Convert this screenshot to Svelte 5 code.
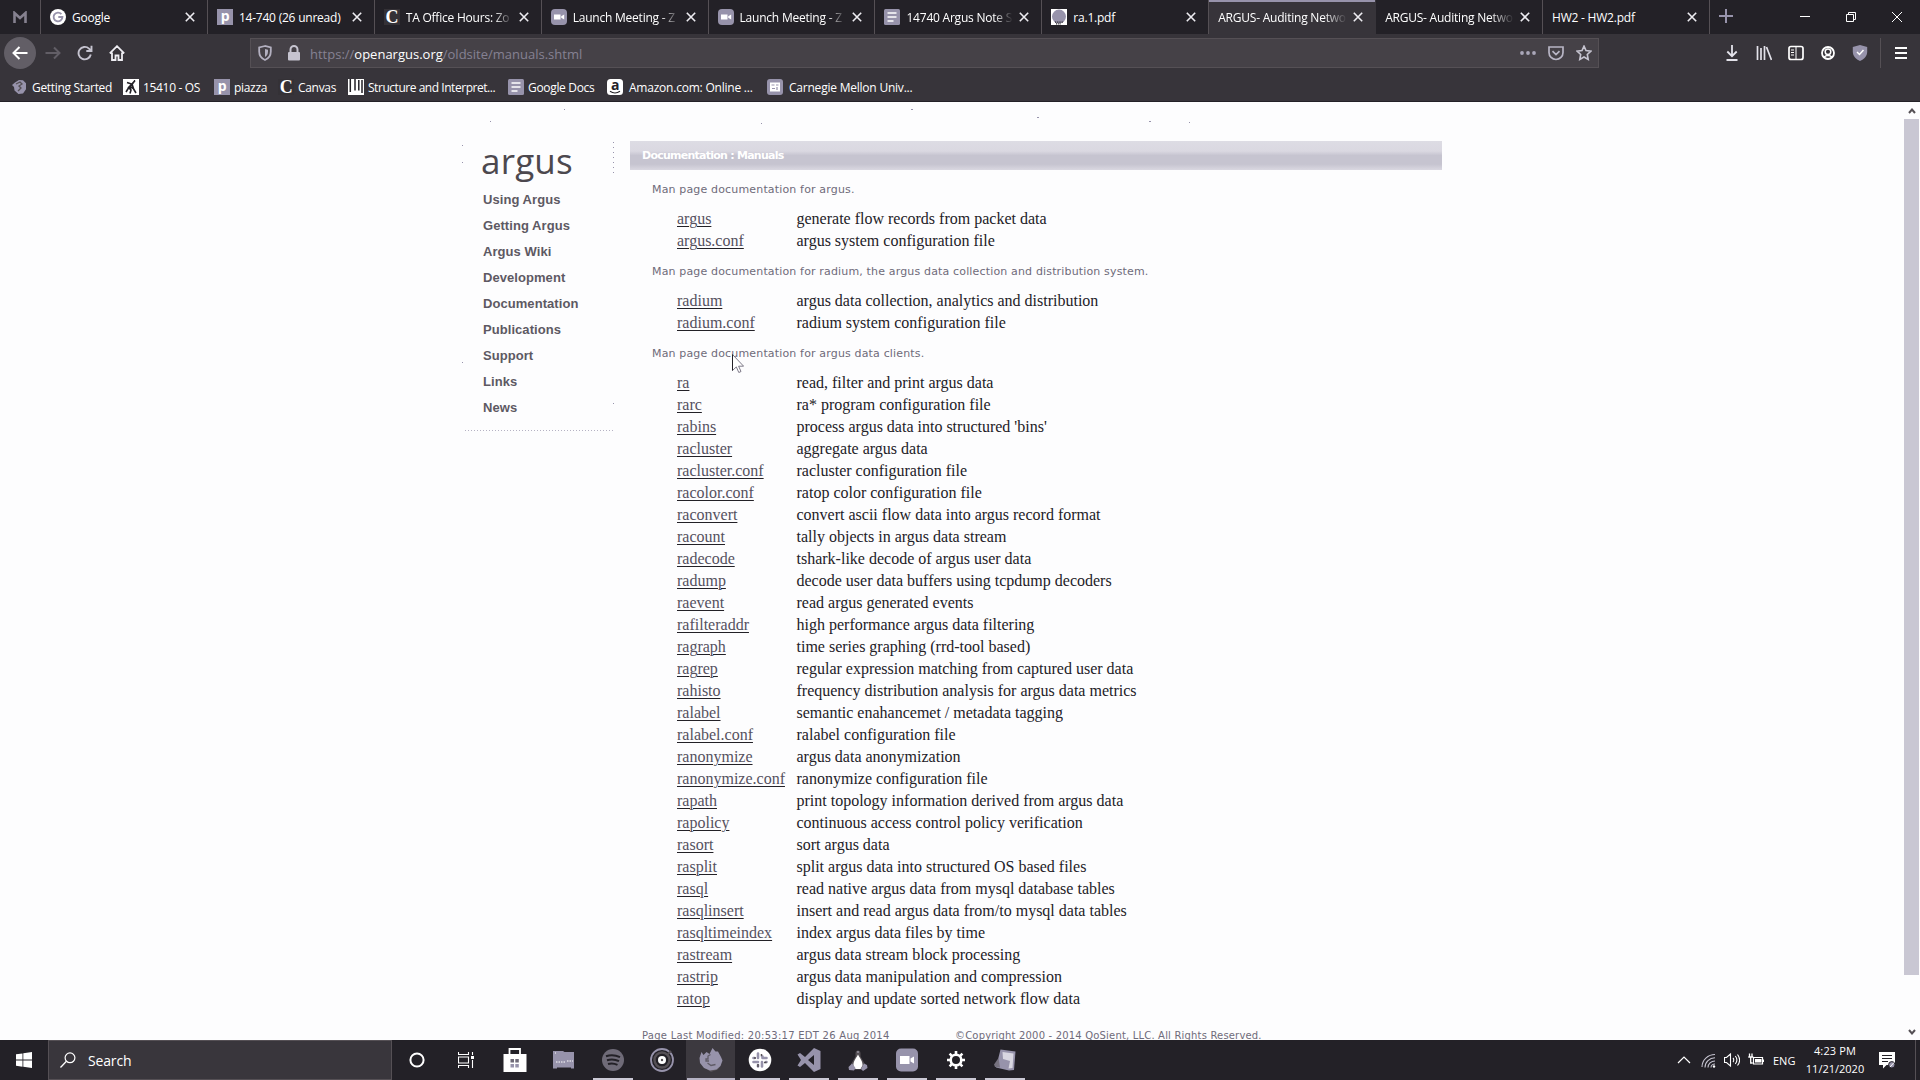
<script>
  const tabs = [
    { icon: 'google', title: 'Google' },
    { icon: 'piazza', title: '14-740 (26 unread)' },
    { icon: 'canvas', title: 'TA Office Hours: Zo', fade: true },
    { icon: 'zoom', title: 'Launch Meeting - Z', fade: true },
    { icon: 'zoom', title: 'Launch Meeting - Z', fade: true },
    { icon: 'docs', title: '14740 Argus Note S', fade: true },
    { icon: 'globe', title: 'ra.1.pdf' },
    { title: 'ARGUS- Auditing Netwo', active: true, fade: true },
    { title: 'ARGUS- Auditing Netwo', fade: true },
    { title: 'HW2 - HW2.pdf' }
  ];

  const bookmarks = [
    ['fox', 'Getting Started'],
    ['runner', '15410 - OS'],
    ['piazza', 'piazza'],
    ['canvas', 'Canvas'],
    ['books', 'Structure and Interpret...'],
    ['docs', 'Google Docs'],
    ['amazon', 'Amazon.com: Online ...'],
    ['cmu', 'Carnegie Mellon Univ...']
  ];

  const menu = ['Using Argus', 'Getting Argus', 'Argus Wiki', 'Development', 'Documentation', 'Publications', 'Support', 'Links', 'News'];

  const sections = [
    {
      intro: 'Man page documentation for argus.',
      rows: [
        ['argus', 'generate flow records from packet data'],
        ['argus.conf', 'argus system configuration file']
      ]
    },
    {
      intro: 'Man page documentation for radium, the argus data collection and distribution system.',
      rows: [
        ['radium', 'argus data collection, analytics and distribution'],
        ['radium.conf', 'radium system configuration file']
      ]
    },
    {
      intro: 'Man page documentation for argus data clients.',
      rows: [
        ['ra', 'read, filter and print argus data'],
        ['rarc', 'ra* program configuration file'],
        ['rabins', "process argus data into structured 'bins'"],
        ['racluster', 'aggregate argus data'],
        ['racluster.conf', 'racluster configuration file'],
        ['racolor.conf', 'ratop color configuration file'],
        ['raconvert', 'convert ascii flow data into argus record format'],
        ['racount', 'tally objects in argus data stream'],
        ['radecode', 'tshark-like decode of argus user data'],
        ['radump', 'decode user data buffers using tcpdump decoders'],
        ['raevent', 'read argus generated events'],
        ['rafilteraddr', 'high performance argus data filtering'],
        ['ragraph', 'time series graphing (rrd-tool based)'],
        ['ragrep', 'regular expression matching from captured user data'],
        ['rahisto', 'frequency distribution analysis for argus data metrics'],
        ['ralabel', 'semantic enahancemet / metadata tagging'],
        ['ralabel.conf', 'ralabel configuration file'],
        ['ranonymize', 'argus data anonymization'],
        ['ranonymize.conf', 'ranonymize configuration file'],
        ['rapath', 'print topology information derived from argus data'],
        ['rapolicy', 'continuous access control policy verification'],
        ['rasort', 'sort argus data'],
        ['rasplit', 'split argus data into structured OS based files'],
        ['rasql', 'read native argus data from mysql database tables'],
        ['rasqlinsert', 'insert and read argus data from/to mysql data tables'],
        ['rasqltimeindex', 'index argus data files by time'],
        ['rastream', 'argus data stream block processing'],
        ['rastrip', 'argus data manipulation and compression'],
        ['ratop', 'display and update sorted network flow data']
      ]
    }
  ];

  const apps = [
    { icon: 'folder' },
    { icon: 'spotify', open: true },
    { icon: 'disc' },
    { icon: 'firefox', open: true, active: true },
    { icon: 'slack', open: true },
    { icon: 'vscode', open: true },
    { icon: 'tux', open: true },
    { icon: 'meeting', open: true },
    { icon: 'gear', open: true },
    { icon: 'notepad', open: true }
  ];
</script>

{#snippet favicon(name)}
  <svg class="favicon" viewBox="0 0 16 16">
    {#if name === 'google'}
      <circle cx="8" cy="8" r="8" fill="#fff" />
      <path d="M11.4 5.2A4.4 4.4 0 1 0 12.4 8H8.3" fill="none" stroke="#9793ab" stroke-width="1.9" />
    {:else if name === 'piazza'}
      <rect width="16" height="16" fill="#9793ab" />
      <text x="8" y="12" text-anchor="middle" font-family="Open Sans, sans-serif" font-weight="700" font-size="14" fill="#fff">p</text>
    {:else if name === 'canvas'}
      <rect width="16" height="16" fill="#343136" />
      <text x="8" y="14" text-anchor="middle" font-family="Liberation Serif, serif" font-weight="700" font-size="18" fill="#fff">C</text>
    {:else if name === 'zoom'}
      <rect width="16" height="16" rx="4" fill="#9793ab" />
      <path d="M3 5.5h6.5v5H3zM10.2 7.3l3-1.8v5l-3-1.8z" fill="#fff" />
    {:else if name === 'docs'}
      <rect width="16" height="16" rx="1.5" fill="#9793ab" />
      <path d="M3.5 4h9M3.5 8h9M3.5 12h6" stroke="#fff" stroke-width="1.7" />
    {:else if name === 'globe'}
      <rect width="16" height="16" fill="#fff" />
      <circle cx="8" cy="7.6" r="7" fill="#9793ab" />
      <path d="M4 13.2h8M5 14.8h5" stroke="#232127" stroke-width="1.2" stroke-dasharray="1.2 1" />
    {:else if name === 'fox'}
      <path d="M3 3.500 7 1l4 .3 3 3v6l-3 4.200-4.500.4-4-3.400L2 8l-2-2z" fill="#9793ab" />
      <path d="M4 5l4-2 2 2-3 2 2 2-3 3" stroke="#555055" stroke-width="1.3" fill="none" />
    {:else if name === 'runner'}
      <rect width="16" height="16" fill="#fff" />
      <path d="M12 1.500 9 5l1.500 4.500L7 8zM9 5 5.500 8.500 8 11l-1 3.500M10 9l3 5M5.500 9 3 13M8.500 5 4 3.500" stroke="#232127" stroke-width="1.600" fill="#232127" />
    {:else if name === 'books'}
      <rect width="16" height="16" fill="#fff" />
      <path d="M2.3 0v13M7 0v11.5M10.8 1v10.5M14 1v13" stroke="#232127" stroke-width="1.5" />
    {:else if name === 'amazon'}
      <rect width="16" height="16" rx="3.5" fill="#fff" />
      <text x="8" y="11" text-anchor="middle" font-family="Open Sans, sans-serif" font-weight="700" font-size="14" fill="#232127">a</text>
      <path d="M3 12.3c3 2 7 2 10 0" stroke="#232127" stroke-width="1.1" fill="none" />
    {:else if name === 'cmu'}
      <rect width="16" height="16" rx="3" fill="#9793ab" />
      <path d="M3 3.500h10v9H3z" fill="#fff" />
      <path d="M4.500 6h3M9 6h2.500M5 9.500h3M10 8v3" stroke="#9793ab" stroke-width="1.2" />
    {/if}
  </svg>
{/snippet}

{#snippet app(name)}
  <svg class="appicon" viewBox="0 0 24 24">
    {#if name === 'folder'}
      <path d="M1 3h10l1.500 1H22v16.500h-3v-1H5v1H1z" fill="#9793ab" />
      <path d="M4 14h9M15 13h6M3 5h1" stroke="#fff" stroke-width="1" stroke-dasharray="1.500 1" />
    {:else if name === 'spotify'}
      <circle cx="12" cy="12" r="11" fill="#6f6b78" />
      <path d="M5 8.200c4.500-1.500 10-1 14 1M6 12.200c4-1.200 8.500-.8 12 1M7 16c3.500-1 6.500-.6 9.500.9" stroke="#232127" stroke-width="2" fill="none" />
    {:else if name === 'disc'}
      <circle cx="12" cy="12" r="11" fill="none" stroke="#9793ab" stroke-width="1.800" />
      <circle cx="12" cy="12" r="7.500" fill="none" stroke="#555055" stroke-width="2.400" />
      <circle cx="12" cy="12" r="4" fill="#fff" />
      <circle cx="12" cy="12" r="1.200" fill="#555055" />
      <path d="m18 6 3-3" stroke="#555055" stroke-width="2" />
    {:else if name === 'firefox'}
      <path d="M5 19.500 12 24l7-2.500 2-3z" fill="#555055" />
      <path d="M2.500 4 4.500 7l3-3 3 2L13.500 0l3 3.500 2.500 0L22 9l1.500 3.500-2 5.500-4 3.500-6.500 1-6-2.500L1 15 .500 10z" fill="#9793ab" />
      <path d="M11.500 6.500 9 8v3H7v2h3M8.500 15l3.500 2.500 4.500-1" stroke="#5f5b66" stroke-width="1.300" fill="none" />
    {:else if name === 'slack'}
      <circle cx="12" cy="12" r="11.300" fill="#fff" />
      <g fill="none" stroke="#9793ab" stroke-width="2.600" stroke-linecap="round">
        <path d="M10 5.500V10M5.500 10H6.500M14 8.500h.500M18.500 10H14.500M10 14H5.500M10 18.500V17M14 14v4.500M18.500 14h-.5" />
      </g>
      <path d="M13.500 6v2M6 10h2M16 14.500h2.500M10 16v3" stroke="#555055" stroke-width="1.500" />
    {:else if name === 'vscode'}
      <path d="M17 0 23.500 3v18L17 24 8 15l-5 4-2.500-1.500L4 12 .500 6.500 3 5l5 4zm0 7-6 5 6 5z" fill="#9793ab" fill-rule="evenodd" />
    {:else if name === 'tux'}
      <path d="M9.500 5.500a2.500 3 0 0 1 5 0v3l4 7-1 6h-11l-1-6 4-7z" fill="#555055" />
      <path d="M12 6.500c1.500 3 5 7 4.500 11l-2 3.500h-5l-2-3.500C7 13.500 10.500 9.500 12 6.500z" fill="#fff" />
      <path d="m6 15.500 3.500 4.500-1.500 2.500-5-.5-.5-3zM18 15.500l3 1.500.5 3-4.500 3-2-2z" fill="#9793ab" />
      <path d="M11 4h2" stroke="#b5b2c3" />
    {:else if name === 'meeting'}
      <rect x="1" y=".5" width="22" height="23" rx="5" fill="#9793ab" />
      <path d="M5 8h9.500v8H5zM15.500 10.500 19 8.500v7l-3.500-2z" fill="#fff" />
    {:else if name === 'gear'}
      <circle cx="12" cy="12" r="5.300" fill="none" stroke="#fff" stroke-width="2.600" />
      <path d="M12 3v3M12 18v3M3 12h3M18 12h3M5.600 5.600l2.200 2.200M16.200 16.200l2.200 2.200M18.400 5.600l-2.200 2.200M7.800 16.200l-2.200 2.200" stroke="#fff" stroke-width="2.600" />
    {:else if name === 'notepad'}
      <path d="M7.500 1.500 22.500 3.500 21 22l-5 .5-13-3z" fill="#9793ab" />
      <path d="m9.500 4 11 1.500L19.500 20l-4 .5L17 13l-7-2z" fill="#d9d7e1" />
      <path d="M5.500 10 1 16.500l1 2.500 5 .5z" fill="#76727f" />
    {/if}
  </svg>
{/snippet}

<div class="screen">
  <header class="tabbar">
    <div class="pinned">
      <svg width="14" height="12" viewBox="0 0 14 12"><path d="M1.500 12V2L7 7l5.500-5v10" fill="none" stroke="#85818f" stroke-width="2.600" /></svg>
    </div>
    {#each tabs as tab}
      <div class="tab" class:active={tab.active}>
        {#if tab.icon}{@render favicon(tab.icon)}{/if}
        <span class="title" class:fade={tab.fade}>{tab.title}</span>
        <svg class="close" viewBox="0 0 10 10"><path d="m.8.800 8.400 8.400M9.200.800.800 9.200" stroke="#eeedf2" stroke-width="1.600" /></svg>
      </div>
    {/each}
    <svg class="plus" viewBox="0 0 14 14"><path d="M7 0v14M0 7h14" stroke="#9793ab" stroke-width="2" /></svg>
    <div class="window-buttons">
      <svg viewBox="0 0 12 12"><path d="M1 5.500h10" stroke="#fff" /></svg>
      <svg viewBox="0 0 12 12"><path d="M1.500 3.500h7v7h-7zM3.500 3.500v-2h7v7h-2" fill="none" stroke="#fff" /></svg>
      <svg viewBox="0 0 12 12"><path d="m1 1 10 10M11 1 1 11" stroke="#fff" /></svg>
    </div>
  </header>

  <div class="navbar">
    <div class="nav-left">
      <div class="back"><svg viewBox="0 0 16 16"><path d="M15.500 8H1M7.500 2 1.500 8l6 6" fill="none" stroke="#fff" stroke-width="2" /></svg></div>
      <svg viewBox="0 0 16 16"><path d="M.5 8H15M9 2.500 14.500 8 9 13.500" fill="none" stroke="#625e66" stroke-width="2" /></svg>
      <svg viewBox="0 0 16 16"><path d="M13.800 9.500A6.200 6.200 0 1 1 12 3.600l1.500 1.600M14.500.8v5.200H9.300" fill="none" stroke="#c6c4d0" stroke-width="1.900" /></svg>
      <svg viewBox="0 0 16 16"><path d="M.8 8.300 8 1.200l7.200 7.100M3 7.500V15h3.500v-4.500h3V15H13V7.500" fill="none" stroke="#eeedf2" stroke-width="1.800" /></svg>
    </div>
    <div class="urlbar">
      <svg class="shield" viewBox="0 0 14 16"><path d="M7 1 1.200 2.500v4C1.200 10.500 3.500 13.500 7 15c3.500-1.500 5.800-4.500 5.800-8.500v-4z" fill="none" stroke="#b3b0c0" stroke-width="1.800" /><path d="M7 4v8c2-1.200 3-3 3-5.500V4.700z" fill="#b3b0c0" /></svg>
      <svg class="lock" viewBox="0 0 14 16"><path d="M3.500 8V4.500a3.500 3.500 0 0 1 7 0V8" fill="none" stroke="#c6c4d0" stroke-width="2" /><rect x="1" y="7" width="12" height="8.500" rx="1" fill="#c6c4d0" /></svg>
      <span class="url">https://<b>openargus.org</b>/oldsite/manuals.shtml</span>
      <div class="url-actions">
        <svg viewBox="0 0 16 16"><circle cx="2" cy="8" r="1.900" fill="#aaa7b9" /><circle cx="8" cy="8" r="1.900" fill="#aaa7b9" /><circle cx="14" cy="8" r="1.900" fill="#aaa7b9" /></svg>
        <svg viewBox="0 0 16 16"><path d="M1 2h14v5.500a7 7 0 0 1-14 0zM4.500 6.200 8 9.600l3.500-3.400" fill="none" stroke="#b8b5c5" stroke-width="1.700" /></svg>
        <svg viewBox="0 0 16 16"><path d="m8 1.200 2 4.400 4.900.6-3.600 3.300.9 4.900L8 12l-4.200 2.400.9-4.900L1.100 6.200 6 5.600z" fill="none" stroke="#c6c4d0" stroke-width="1.600" /></svg>
      </div>
    </div>
    <div class="nav-right">
      <svg viewBox="0 0 16 16"><path d="M8 0v11M3.300 6.500 8 11.200l4.700-4.700M2.500 15h11" fill="none" stroke="#e3e2ea" stroke-width="1.800" /></svg>
      <svg viewBox="0 0 16 16"><path d="M1.500 1v14M5 3v12M8.500 1v14M10.500 2l5 13" fill="none" stroke="#e3e2ea" stroke-width="1.700" /></svg>
      <svg viewBox="0 0 16 16"><rect x="1" y="1.500" width="14" height="13" rx="2" fill="none" stroke="#fff" stroke-width="1.700" /><path d="M8 2v12M3 5h3M3 7.500h3M3 10h3" stroke="#fff" /></svg>
      <svg viewBox="0 0 16 16"><circle cx="8" cy="8" r="6" fill="none" stroke="#fff" stroke-width="1.800" /><circle cx="8" cy="6.800" r="2.800" fill="none" stroke="#fff" stroke-width="1.500" /><path d="M4 12.200c2-2.200 6-2.200 8 0" fill="none" stroke="#fff" stroke-width="1.600" /></svg>
      <svg viewBox="0 0 16 16"><path d="M8 0 .800 2v5C1 11 4 14.500 8 16c4-1.500 7-5 7.200-9V2z" fill="#9793ab" /><path d="m5 7 2.500 2.500L11.500 5" fill="none" stroke="#fff" stroke-width="1.500" /></svg>
      <i></i>
      <svg viewBox="0 0 16 16"><path d="M2 3h12M2 8h12M2 13h12" stroke="#fff" stroke-width="2" /></svg>
    </div>
  </div>

  <div class="bookmarks">
    {#each bookmarks as [icon, label]}
      <div class="bookmark">{@render favicon(icon)}<span>{label}</span></div>
    {/each}
  </div>

  <div class="viewport">
    <svg class="specks" viewBox="0 0 800 340">
      <path d="M104 7h1M30 19h1M301 21h1M451 7h2M577 15h2M689 19h2M729 20h1M2 43h1M2 60h1M2 260h1M153 301h1" stroke="#9793ab" stroke-width="1" />
      <path d="M153.500 40v34" stroke="#9793ab" stroke-width="1" stroke-dasharray="1 4" />
      <path d="M5 328.500h149" stroke="#b5b2c3" stroke-width="1" stroke-dasharray="1 2" />
    </svg>
    <nav class="sidebar">
      <div class="logo">argus</div>
      {#each menu as item}
        <a href="#top">{item}</a>
      {/each}
    </nav>
    <main>
      <h1>Documentation : Manuals</h1>
      {#each sections as section}
        <p>{section.intro}</p>
        <div class="pages">
          {#each section.rows as [name, text]}
            <div class="row"><span class="cell"><a href="#top">{name}</a></span><span>{text}</span></div>
          {/each}
        </div>
      {/each}
      <footer><span>Page Last Modified: 20:53:17 EDT 26 Aug 2014</span><span>©Copyright 2000 - 2014 QoSient, LLC. All Rights Reserved.</span></footer>
    </main>
    <div class="scrollbar">
      <svg viewBox="0 0 8 6"><path d="m1 5 3-3.500L7 5" fill="none" stroke="#555055" stroke-width="2" /></svg>
      <div class="thumb"></div>
      <svg viewBox="0 0 8 6"><path d="m1 1 3 3.500L7 1" fill="none" stroke="#555055" stroke-width="2" /></svg>
    </div>
    <svg class="cursor" viewBox="0 0 12 19"><path d="M.5.500v16l3.800-3.600 2.500 5.600 2.200-1-2.400-5.300h5z" fill="#fff" stroke="#6f6b7c" stroke-width=".9" /><path d="M.5.500v16" stroke="#232127" /></svg>
  </div>

  <div class="taskbar">
    <div class="start"><svg viewBox="0 0 16 16"><path d="M0 2.300 6.500 1.400v6.200H0zM7.300 1.200 16 0v7.600H7.300zM0 8.400h6.500v6.300L0 13.800zM7.300 8.400H16V16l-8.700-1.200z" fill="#fff" /></svg></div>
    <div class="search">
      <svg viewBox="0 0 16 16"><circle cx="10" cy="5.800" r="4.900" fill="none" stroke="#fff" stroke-width="1.200" /><path d="M6.400 9.300.5 15.500" stroke="#fff" stroke-width="1.300" /></svg>
      <span>Search</span>
    </div>
    <div class="slot"><svg class="ring" viewBox="0 0 16 16"><circle cx="8" cy="8" r="6.600" fill="none" stroke="#fff" stroke-width="2" /></svg></div>
    <div class="slot"><svg class="ring" viewBox="0 0 16 16"><path d="M.5 0v2.500h10V0M.5 5h10v6H.5zM.5 16v-2.500h10V16M14.500 0v3M14.500 8v8" fill="none" stroke="#fff" stroke-width="1.100" /><path d="M13 4h3v3h-3z" fill="#fff" /></svg></div>
    <div class="slot">
      <svg class="appicon" viewBox="0 0 24 24"><path d="M6.500 7V1h10.500v6" fill="none" stroke="#fff" stroke-width="1.800" /><path d="M.5 6h23v18H.5z" fill="#fff" /><path d="M7.500 11H11v3.500H7.500zM12.300 11h3.500v3.500h-3.500z" fill="#6f6b78" /><path d="M7.500 16H11v3.500H7.500zM12.300 16h3.500v3.500h-3.500z" fill="#9793ab" /></svg>
    </div>
    {#each apps as item}
      <div class="slot" class:open={item.open} class:current={item.active}>{@render app(item.icon)}</div>
    {/each}
    <div class="tray">
      <svg viewBox="0 0 16 16"><path d="m2 11 6-6 6 6" fill="none" stroke="#fff" stroke-width="1.200" /></svg>
      <svg viewBox="0 0 16 16"><path d="M2 15C2 8 8 2.500 15 2.500M5 15.500C5 10 9.500 5.800 15 5.800M8 15.500C8 12 11 9 15 9M11 15.500c0-2 2-3.500 4-3.500" fill="none" stroke="#c6c4d0" stroke-width="1.100" /><circle cx="14" cy="14.500" r="1.200" fill="#fff" /></svg>
      <svg viewBox="0 0 16 16"><path d="M.5 5.500h2l4-3.500v12l-4-3.500h-2zM9 6c1 1 1 3 0 4M11.300 4c2 2.500 2 5.500 0 8M13.500 2.500c2.700 3.500 2.700 7.500 0 11" fill="none" stroke="#fff" stroke-width="1.100" /></svg>
      <svg viewBox="0 0 16 16"><path d="M5.500 5.500h9v6.500h-9zM15.500 7.500v2.500" fill="none" stroke="#fff" stroke-width="1.200" /><path d="M7 7h6.500v3.500H7z" fill="#fff" /><path d="M1.500 1.500v3M4 1.500v3M.3 5h5M2.700 5.500v5.500h2" stroke="#fff" stroke-width="1.300" fill="none" /></svg>
      <span class="lang">ENG</span>
      <div class="clock"><span class="time">4:23 PM</span><span>11/21/2020</span></div>
      <svg class="notes" viewBox="0 0 16 17"><path d="M0 0h16v13H7.500L4 16.500V13H0z" fill="#fff" /><path d="M3 3.500h10M3 6.500h10M3 9.500h6" stroke="#232127" /><circle cx="12.800" cy="12.800" r="3.200" fill="#9793ab" stroke="#232127" /><path d="m11 15 4-4.500" stroke="#fff" /></svg>
    </div>
  </div>
</div>

<style>
  :global(body) {
    margin: 0;
    overflow: hidden;
  }
  .screen {
    width: 1920px;
    height: 1080px;
    display: flex;
    flex-direction: column;
    overflow: hidden;
    background: #fdfdfe;
    font-family: 'Open Sans', 'Noto Sans', sans-serif;
    color: #fff;
  }
  svg {
    display: block;
    flex: none;
  }
  .favicon {
    width: 16px;
    height: 16px;
    overflow: visible;
  }

  .tabbar {
    height: 34px;
    display: flex;
    align-items: stretch;
    background: #232127;
  }
  .pinned {
    width: 41px;
    display: grid;
    place-items: center;
    box-sizing: border-box;
    border-right: 1px solid #555055;
  }
  .tab {
    width: 166.900px;
    box-sizing: border-box;
    padding: 0 12px 0 9px;
    display: flex;
    align-items: center;
    gap: 6px;
    border-right: 1px solid #555055;
    font-size: 12px;
    letter-spacing: -0.220px;
  }
  .tab.active {
    background: #37343a;
    border-right-color: #37343a;
    box-shadow: inset 0 2px #9793ab;
  }
  .title {
    flex: 1;
    min-width: 0;
    white-space: nowrap;
  }
  .title.fade {
    mask-image: linear-gradient(to right, #000 82%, transparent);
  }
  .close {
    width: 10px;
    height: 10px;
  }
  .plus {
    width: 14px;
    height: 14px;
    margin: 9px 0 0 9px;
  }
  .window-buttons {
    margin-left: auto;
    margin-right: 17px;
    display: flex;
    align-items: center;
    gap: 34px;
  }
  .window-buttons svg {
    width: 12px;
    height: 12px;
  }

  .navbar {
    height: 38px;
    background: #37343a;
    display: flex;
    align-items: center;
  }
  .nav-left {
    width: 250px;
    display: flex;
    align-items: center;
    gap: 16px;
    padding-left: 4px;
    box-sizing: border-box;
  }
  .nav-left svg {
    width: 16px;
    height: 16px;
  }
  .back {
    width: 32px;
    height: 32px;
    margin-right: -7px;
    border-radius: 50%;
    display: grid;
    place-items: center;
    background: #625e66;
  }
  .urlbar {
    width: 1349px;
    height: 30px;
    box-sizing: border-box;
    border: 1px solid #555055;
    background: #454147;
    display: flex;
    align-items: center;
    padding-left: 7px;
  }
  .shield,
  .lock {
    width: 14px;
    height: 16px;
  }
  .lock {
    margin-left: 15px;
  }
  .url {
    margin-left: 9px;
    padding-top: 1px;
    font-size: 13px;
    color: #858193;
  }
  .url b {
    font-weight: 400;
    color: #fff;
  }
  .url-actions {
    margin-left: auto;
    margin-right: 6px;
    display: flex;
    gap: 12px;
  }
  .url-actions svg,
  .nav-right svg {
    width: 16px;
    height: 16px;
  }
  .nav-right {
    margin-left: auto;
    margin-right: 11px;
    display: flex;
    align-items: center;
    gap: 16px;
  }
  .nav-right i {
    width: 1px;
    height: 30px;
    margin: 0 -4px 0 -4px;
    background: #555055;
  }

  .bookmarks {
    height: 30px;
    box-sizing: border-box;
    padding: 1px 0 0 12px;
    background: #37343a;
    border-bottom: 1px solid #232127;
    display: grid;
    grid-template-columns: 111px 91px 64px 70px 160px 99px 160px 160px;
    align-items: center;
    font-size: 12px;
    letter-spacing: -0.320px;
  }
  .bookmark {
    display: flex;
    align-items: center;
    gap: 4px;
    white-space: nowrap;
  }
  .bookmark:nth-child(5) {
    letter-spacing: -0.460px;
  }
  .bookmark:nth-child(n + 7) {
    gap: 6px;
    letter-spacing: -0.220px;
  }

  .viewport {
    height: 938px;
    position: relative;
    display: flex;
    overflow: hidden;
    color: #232127;
  }
  .specks {
    position: absolute;
    left: 460px;
    top: 0;
    width: 800px;
    height: 340px;
    shape-rendering: crispEdges;
  }
  .sidebar {
    width: 147px;
    padding: 35px 0 0 483px;
    display: flex;
    flex-direction: column;
  }
  .sidebar a {
    height: 26px;
    line-height: 26px;
    font-family: 'Liberation Sans', Arial, sans-serif;
    font-weight: 700;
    font-size: 13px;
    letter-spacing: 0.060px;
    color: #5d5963;
    text-decoration: none;
  }
  .logo {
    height: 50px;
    line-height: 48px;
    margin-left: -2px;
    font-size: 35px;
    letter-spacing: 0.200px;
    color: #4c484e;
  }
  main {
    width: 812px;
    padding-top: 39px;
  }
  h1 {
    height: 29px;
    margin: 0;
    padding-left: 12px;
    font: 700 11px/30px 'DejaVu Sans', Verdana, sans-serif;
    letter-spacing: -0.750px;
    color: #fff;
    background: linear-gradient(#dddce4, #dad8e1 35%, #c6c4d0 50%, #c6c4d0 80%, #dad8e1);
  }
  p {
    height: 38px;
    margin: 0;
    padding-left: 22px;
    font: 11px/40px 'DejaVu Sans', Verdana, sans-serif;
    letter-spacing: 0.158px;
    white-space: nowrap;
    color: #6f6b7a;
  }
  .pages {
    padding-left: 47px;
    font: 16px/22px 'Liberation Serif', 'Times New Roman', serif;
  }
  .row {
    height: 22px;
    display: flex;
    white-space: nowrap;
  }
  .cell {
    width: 119.500px;
  }
  .cell a {
    color: #55515f;
    text-decoration: underline #232127 1px;
    text-underline-offset: 2px;
  }
  footer {
    height: 30px;
    padding-left: 12px;
    display: flex;
    font: 10px/52px 'DejaVu Sans', Verdana, sans-serif;
    letter-spacing: 0.180px;
    white-space: nowrap;
    color: #6f6b7a;
  }
  footer span:first-child {
    width: 313px;
    letter-spacing: 0.260px;
  }
  .scrollbar {
    width: 17px;
    margin-left: auto;
    display: flex;
    flex-direction: column;
    align-items: center;
  }
  .scrollbar svg {
    width: 8px;
    height: 6px;
    margin: 6px 0 5px;
  }
  .scrollbar svg:last-child {
    margin: auto 0 5px;
  }
  .thumb {
    width: 15px;
    height: 856px;
    background: #c9c7d3;
  }
  .cursor {
    position: absolute;
    left: 732px;
    top: 252px;
    width: 12px;
    height: 19px;
  }

  .taskbar {
    height: 40px;
    background: #232127;
    display: flex;
    align-items: stretch;
  }
  .start {
    width: 48px;
    display: grid;
    place-items: center;
  }
  .start svg {
    width: 16px;
    height: 16px;
  }
  .search {
    width: 344px;
    box-sizing: border-box;
    border: 1px solid #555055;
    background: #39363c;
    display: flex;
    align-items: center;
    gap: 12px;
    padding-left: 11px;
    font-size: 14px;
    letter-spacing: -0.150px;
  }
  .search svg,
  .ring {
    width: 16px;
    height: 16px;
  }
  .slot {
    width: 49px;
    display: grid;
    place-items: center;
  }
  .slot.open {
    background: linear-gradient(#cbc9d5, #cbc9d5) center bottom / 40px 2px no-repeat;
  }
  .slot.current {
    background: linear-gradient(#b5b2c3, #b5b2c3) center bottom / 48px 2px no-repeat, #3c393f;
  }
  .appicon {
    width: 24px;
    height: 24px;
  }
  .tray {
    margin-left: auto;
    display: flex;
    align-items: center;
    gap: 8px;
    font-size: 11px;
    border-right: 1px solid #555055;
    margin-right: 4px;
    padding-right: 20px;
  }
  .tray svg {
    width: 16px;
    height: 16px;
  }
  .lang {
    width: 25px;
    margin-left: 1px;
  }
  .clock {
    width: 58px;
    display: flex;
    flex-direction: column;
    align-items: center;
    line-height: 18px;
    margin-right: 7px;
  }
  .time {
    letter-spacing: 0.150px;
  }
  .tray .notes {
    height: 17px;
  }
</style>
